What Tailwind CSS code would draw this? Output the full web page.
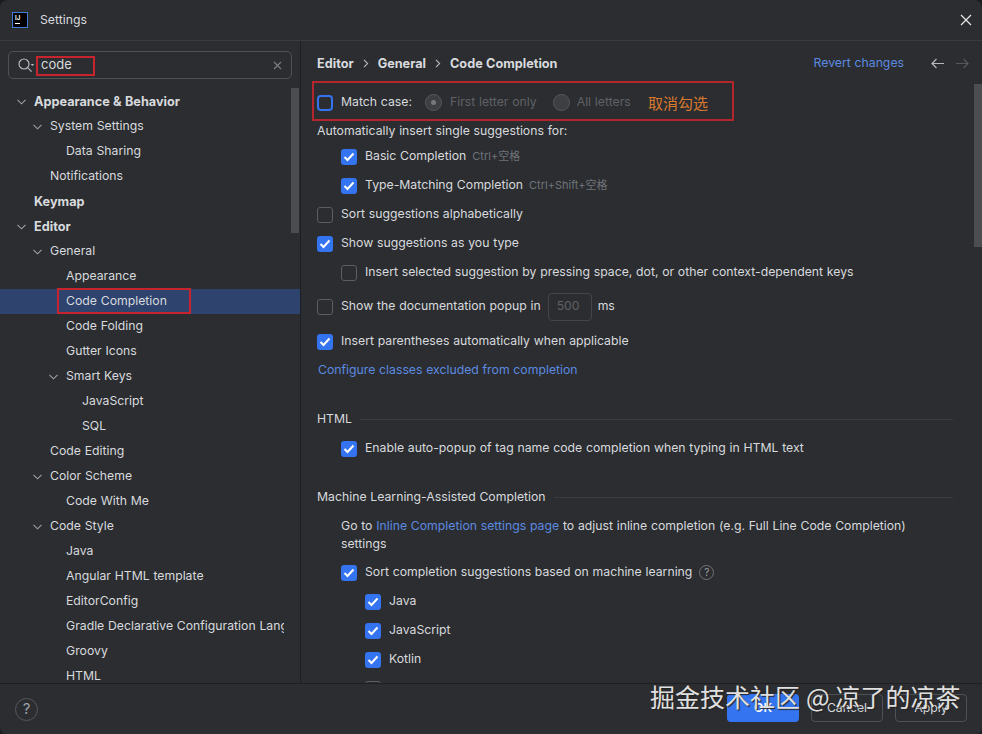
<!DOCTYPE html>
<html lang="en">
<head>
  <meta charset="UTF-8">
  <title>Settings</title>
  <script src="https://cdn.jsdelivr.net/npm/@tailwindcss/browser@4"></script>
</head>
<body class="bg-[#1b1c1e] font-['Inter','Noto_Sans_CJK_SC',sans-serif] text-[12.25px] [word-spacing:0.3px] text-[#d8dade]">
  <div class="relative w-[982px] h-[734px] overflow-hidden rounded-t-[8px] rounded-b-[6px] bg-[#2b2d30] flex flex-col">
    <!-- title bar -->
    <div class="h-[41px] shrink-0 border-b border-[#393b40] flex items-center pl-[12px] pr-[9px]">
      <div class="w-[16px] h-[16px] bg-black border border-[#3f7fd6] flex flex-col pl-[2px] pt-[1px] leading-none">
        <span class="text-[6px] font-bold text-white leading-[7px]">IJ</span>
        <span class="w-[5px] h-[1px] bg-white mt-[2px]"></span>
      </div>
      <span class="ml-[12px]">Settings</span>
      <svg class="ml-auto" width="14" height="14" viewBox="0 0 14 14" fill="none" stroke="#e8e8e8" stroke-width="1.2"><path d="M2 2l10 10M12 2L2 12"/></svg>
    </div>

    <div class="flex h-[642px] shrink-0 overflow-hidden">
      <!-- left tree -->
      <aside class="relative w-[300px] shrink-0 flex flex-col">
        <div class="mx-[8px] mt-[10px] h-[28px] shrink-0 border border-[#4e5157] rounded-[5px] flex items-center pl-[9px] pr-[9px]">
          <svg width="17" height="15" viewBox="0 0 17 15" fill="none" stroke="#b4b8bf" stroke-width="1.2"><circle cx="6" cy="6" r="5"/><path d="M9.6 9.6l4 4"/><path d="M12.6 6h3.6l-1.8 2z" fill="#b4b8bf" stroke="none"/></svg>
          <span class="ml-[6px] text-[13px]">code</span>
          <svg class="ml-auto" width="9" height="9" viewBox="0 0 9 9" fill="none" stroke="#7d8087" stroke-width="1.1"><path d="M1 1l7 7M8 1L1 8"/></svg>
        </div>
        <ul id="tree" class="mt-[10px] h-[594px] w-[300px] overflow-hidden whitespace-nowrap">
          <li class="h-[25px] flex items-center pl-[17px] font-bold text-[12.7px]"><svg class="w-[9px] mr-[8px]" height="6" viewBox="0 0 9 6" fill="none" stroke="#9da0a8" stroke-width="1.1"><path d="M.5.8l4 4 4-4"/></svg>Appearance &amp; Behavior</li>
          <li class="h-[25px] flex items-center pl-[33px]"><svg class="w-[9px] mr-[8px]" height="6" viewBox="0 0 9 6" fill="none" stroke="#9da0a8" stroke-width="1.1"><path d="M.5.8l4 4 4-4"/></svg>System Settings</li>
          <li class="h-[25px] flex items-center pl-[66px]">Data Sharing</li>
          <li class="h-[25px] flex items-center pl-[50px]">Notifications</li>
          <li class="h-[25px] flex items-center pl-[34px] font-bold text-[12.7px]">Keymap</li>
          <li class="h-[25px] flex items-center pl-[17px] font-bold text-[12.7px]"><svg class="w-[9px] mr-[8px]" height="6" viewBox="0 0 9 6" fill="none" stroke="#9da0a8" stroke-width="1.1"><path d="M.5.8l4 4 4-4"/></svg>Editor</li>
          <li class="h-[25px] flex items-center pl-[33px]"><svg class="w-[9px] mr-[8px]" height="6" viewBox="0 0 9 6" fill="none" stroke="#9da0a8" stroke-width="1.1"><path d="M.5.8l4 4 4-4"/></svg>General</li>
          <li class="h-[25px] flex items-center pl-[66px]">Appearance</li>
          <li class="h-[25px] flex items-center pl-[66px] bg-[#2e436e]">Code Completion</li>
          <li class="h-[25px] flex items-center pl-[66px]">Code Folding</li>
          <li class="h-[25px] flex items-center pl-[66px]">Gutter Icons</li>
          <li class="h-[25px] flex items-center pl-[49px]"><svg class="w-[9px] mr-[8px]" height="6" viewBox="0 0 9 6" fill="none" stroke="#9da0a8" stroke-width="1.1"><path d="M.5.8l4 4 4-4"/></svg>Smart Keys</li>
          <li class="h-[25px] flex items-center pl-[82px]">JavaScript</li>
          <li class="h-[25px] flex items-center pl-[82px]">SQL</li>
          <li class="h-[25px] flex items-center pl-[50px]">Code Editing</li>
          <li class="h-[25px] flex items-center pl-[33px]"><svg class="w-[9px] mr-[8px]" height="6" viewBox="0 0 9 6" fill="none" stroke="#9da0a8" stroke-width="1.1"><path d="M.5.8l4 4 4-4"/></svg>Color Scheme</li>
          <li class="h-[25px] flex items-center pl-[66px]">Code With Me</li>
          <li class="h-[25px] flex items-center pl-[33px]"><svg class="w-[9px] mr-[8px]" height="6" viewBox="0 0 9 6" fill="none" stroke="#9da0a8" stroke-width="1.1"><path d="M.5.8l4 4 4-4"/></svg>Code Style</li>
          <li class="h-[25px] flex items-center pl-[66px]">Java</li>
          <li class="h-[25px] flex items-center pl-[66px]">Angular HTML template</li>
          <li class="h-[25px] flex items-center pl-[66px]">EditorConfig</li>
          <li class="h-[25px] w-[284px] overflow-hidden flex items-center pl-[66px]">Gradle Declarative Configuration Language</li>
          <li class="h-[25px] flex items-center pl-[66px]">Groovy</li>
          <li class="h-[25px] flex items-center pl-[66px]">HTML</li>
        </ul>
        <div class="absolute left-[291px] top-[47px] w-[8px] h-[145px] bg-[#4b4d51]"></div>
      </aside>

      <!-- settings pane -->
      <main class="relative flex-1 min-w-0 border-l border-[#1e1f22]">
        <div class="h-[47px] flex items-center pl-[16px] pr-[13px] mt-[-1px]">
          <div class="flex items-center font-bold text-[12.7px]">
            <span>Editor</span>
            <svg class="mx-[9px]" width="6" height="9" viewBox="0 0 6 9" fill="none" stroke="#b4b8bf" stroke-width="1.1"><path d="M1 .8l3.6 3.7L1 8.2"/></svg>
            <span>General</span>
            <svg class="mx-[9px]" width="6" height="9" viewBox="0 0 6 9" fill="none" stroke="#b4b8bf" stroke-width="1.1"><path d="M1 .8l3.6 3.7L1 8.2"/></svg>
            <span>Code Completion</span>
          </div>
          <span class="ml-auto text-[#5c8ae0]">Revert changes</span>
          <svg class="ml-[27px]" width="13" height="11" viewBox="0 0 13 11" fill="none" stroke="#b4b8bf" stroke-width="1.2"><path d="M13 5.5H1M5.5 1L1 5.5 5.5 10"/></svg>
          <svg class="ml-[12px]" width="13" height="11" viewBox="0 0 13 11" fill="none" stroke="#55575c" stroke-width="1.2"><path d="M0 5.5h12M7.5 1L12 5.5 7.5 10"/></svg>
        </div>

        <div class="flex flex-col pl-[16px] pt-[1px] whitespace-nowrap">
          <div class="h-[29px] flex items-center">
            <span class="w-[16px] h-[16px] rounded-[4px] border-2 border-[#3574f0]"></span>
            <span class="ml-[8px]">Match case:</span>
            <span class="ml-[13px] w-[17px] h-[17px] rounded-full border border-[#55575c] bg-[#3d3f43] flex items-center justify-center"><span class="w-[5px] h-[5px] rounded-full bg-[#77797e]"></span></span>
            <span class="ml-[8px] text-[#5f6166]">First letter only</span>
            <span class="ml-[16px] w-[17px] h-[17px] rounded-full border border-[#55575c] bg-[#3d3f43]"></span>
            <span class="ml-[7px] text-[#5f6166]">All letters</span>
          </div>
          <div class="h-[21px] mt-[4px] flex items-center">Automatically insert single suggestions for:</div>
          <div class="h-[29px] flex items-center pl-[24px]">
            <span class="w-[16px] h-[16px] rounded-[3px] bg-[#3574f0] flex items-center justify-center"><svg width="12" height="10" viewBox="0 0 12 10" fill="none" stroke="#fff" stroke-width="2"><path d="M1.5 5l3 3 6-6.5"/></svg></span>
            <span class="ml-[8px]">Basic Completion</span>
            <span class="ml-[6px] text-[11px] text-[#6f737a]">Ctrl+空格</span>
          </div>
          <div class="h-[29px] flex items-center pl-[24px]">
            <span class="w-[16px] h-[16px] rounded-[3px] bg-[#3574f0] flex items-center justify-center"><svg width="12" height="10" viewBox="0 0 12 10" fill="none" stroke="#fff" stroke-width="2"><path d="M1.5 5l3 3 6-6.5"/></svg></span>
            <span class="ml-[8px]">Type-Matching Completion</span>
            <span class="ml-[6px] text-[11px] text-[#6f737a]">Ctrl+Shift+空格</span>
          </div>
          <div class="h-[29px] flex items-center">
            <span class="w-[16px] h-[16px] rounded-[3px] border border-[#5a5d63]"></span>
            <span class="ml-[8px]">Sort suggestions alphabetically</span>
          </div>
          <div class="h-[29px] flex items-center">
            <span class="w-[16px] h-[16px] rounded-[3px] bg-[#3574f0] flex items-center justify-center"><svg width="12" height="10" viewBox="0 0 12 10" fill="none" stroke="#fff" stroke-width="2"><path d="M1.5 5l3 3 6-6.5"/></svg></span>
            <span class="ml-[8px]">Show suggestions as you type</span>
          </div>
          <div class="h-[29px] flex items-center pl-[24px]">
            <span class="w-[16px] h-[16px] rounded-[3px] border border-[#5a5d63]"></span>
            <span class="ml-[8px]">Insert selected suggestion by pressing space, dot, or other context-dependent keys</span>
          </div>
          <div class="h-[29px] mt-[5px] flex items-center">
            <span class="w-[16px] h-[16px] rounded-[3px] border border-[#5a5d63]"></span>
            <span class="ml-[8px]">Show the documentation popup in</span>
            <span class="ml-[7px] w-[44px] h-[28px] rounded-[4px] border border-[#43454a] text-[#5f6166] flex items-center pl-[8px]">500</span>
            <span class="ml-[6px]">ms</span>
          </div>
          <div class="h-[29px] mt-[6px] flex items-center">
            <span class="w-[16px] h-[16px] rounded-[3px] bg-[#3574f0] flex items-center justify-center"><svg width="12" height="10" viewBox="0 0 12 10" fill="none" stroke="#fff" stroke-width="2"><path d="M1.5 5l3 3 6-6.5"/></svg></span>
            <span class="ml-[8px]">Insert parentheses automatically when applicable</span>
          </div>
          <div class="h-[29px] flex items-center pl-[1px] text-[#5c8ae0]">Configure classes excluded from completion</div>

          <div class="h-[29px] w-[636px] mt-[20px] flex items-center">
            <span>HTML</span>
            <span class="ml-[8px] flex-1 h-[1px] bg-[#393b40]"></span>
          </div>
          <div class="h-[29px] flex items-center pl-[24px]">
            <span class="w-[16px] h-[16px] rounded-[3px] bg-[#3574f0] flex items-center justify-center"><svg width="12" height="10" viewBox="0 0 12 10" fill="none" stroke="#fff" stroke-width="2"><path d="M1.5 5l3 3 6-6.5"/></svg></span>
            <span class="ml-[8px]">Enable auto-popup of tag name code completion when typing in HTML text</span>
          </div>

          <div class="h-[29px] w-[636px] mt-[20px] flex items-center">
            <span>Machine Learning-Assisted Completion</span>
            <span class="ml-[8px] flex-1 h-[1px] bg-[#393b40]"></span>
          </div>
          <p class="pl-[24px] w-[630px] whitespace-normal leading-[18px] pt-[5px] h-[46px]">Go to <span class="text-[#5c8ae0]">Inline Completion settings page</span> to adjust inline completion (e.g. Full Line Code Completion) settings</p>
          <div class="h-[29px] flex items-center pl-[24px]">
            <span class="w-[16px] h-[16px] rounded-[3px] bg-[#3574f0] flex items-center justify-center"><svg width="12" height="10" viewBox="0 0 12 10" fill="none" stroke="#fff" stroke-width="2"><path d="M1.5 5l3 3 6-6.5"/></svg></span>
            <span class="ml-[8px]">Sort completion suggestions based on machine learning</span>
            <span class="ml-[7px] w-[15px] h-[15px] rounded-full border border-[#6f737a] text-[10px] text-[#9da0a8] flex items-center justify-center">?</span>
          </div>
          <div class="h-[29px] flex items-center pl-[48px]">
            <span class="w-[16px] h-[16px] rounded-[3px] bg-[#3574f0] flex items-center justify-center"><svg width="12" height="10" viewBox="0 0 12 10" fill="none" stroke="#fff" stroke-width="2"><path d="M1.5 5l3 3 6-6.5"/></svg></span>
            <span class="ml-[8px]">Java</span>
          </div>
          <div class="h-[29px] flex items-center pl-[48px]">
            <span class="w-[16px] h-[16px] rounded-[3px] bg-[#3574f0] flex items-center justify-center"><svg width="12" height="10" viewBox="0 0 12 10" fill="none" stroke="#fff" stroke-width="2"><path d="M1.5 5l3 3 6-6.5"/></svg></span>
            <span class="ml-[8px]">JavaScript</span>
          </div>
          <div class="h-[29px] flex items-center pl-[48px]">
            <span class="w-[16px] h-[16px] rounded-[3px] bg-[#3574f0] flex items-center justify-center"><svg width="12" height="10" viewBox="0 0 12 10" fill="none" stroke="#fff" stroke-width="2"><path d="M1.5 5l3 3 6-6.5"/></svg></span>
            <span class="ml-[8px]">Kotlin</span>
          </div>
          <div class="h-[29px] flex items-center pl-[48px]">
            <span class="w-[16px] h-[16px] rounded-[3px] border border-[#5a5d63]"></span>
          </div>
        </div>
        <div class="absolute right-[0px] top-[43px] w-[8px] h-[163px] bg-[#4b4d51]"></div>
      </main>
    </div>

    <!-- footer -->
    <div class="flex-1 border-t border-[#1e1f22] flex items-center pl-[15px] pr-[15px]">
      <span class="w-[23px] h-[23px] rounded-full border border-[#55575c] text-[#9da0a8] text-[15px] flex items-center justify-center">?</span>
      <div class="ml-auto flex gap-[12px] mt-[-2px]">
        <span class="w-[72px] h-[28px] rounded-[4px] bg-[#3574f0] text-white font-semibold flex items-center justify-center">OK</span>
        <span class="w-[72px] h-[28px] rounded-[4px] border border-[#4e5157] flex items-center justify-center">Cancel</span>
        <span class="w-[72px] h-[28px] rounded-[4px] border border-[#4e5157] flex items-center justify-center">Apply</span>
      </div>
    </div>

    <!-- annotations drawn over the screenshot -->
    <div class="absolute left-[36px] top-[56px] w-[59px] h-[20px] border-2 border-[#c8242d]"></div>
    <div class="absolute left-[57px] top-[288px] w-[134px] h-[26px] border-2 border-[#c8242d]"></div>
    <div class="absolute left-[312px] top-[81px] w-[422px] h-[40px] border-2 border-[#b4262e]">
      <span class="absolute left-[334px] top-[9px] text-[15px] text-[#d9792f] font-['Noto_Sans_CJK_SC',sans-serif]">取消勾选</span>
    </div>
    <div class="absolute left-[650px] top-[679px] text-[25px] leading-[34px] text-[#e0e0e0] whitespace-nowrap font-['Noto_Sans_CJK_SC',sans-serif] [text-shadow:1px_1px_1px_#222]">掘金技术社区 @ 凉了的凉茶</div>
  </div>
</body>
</html>
